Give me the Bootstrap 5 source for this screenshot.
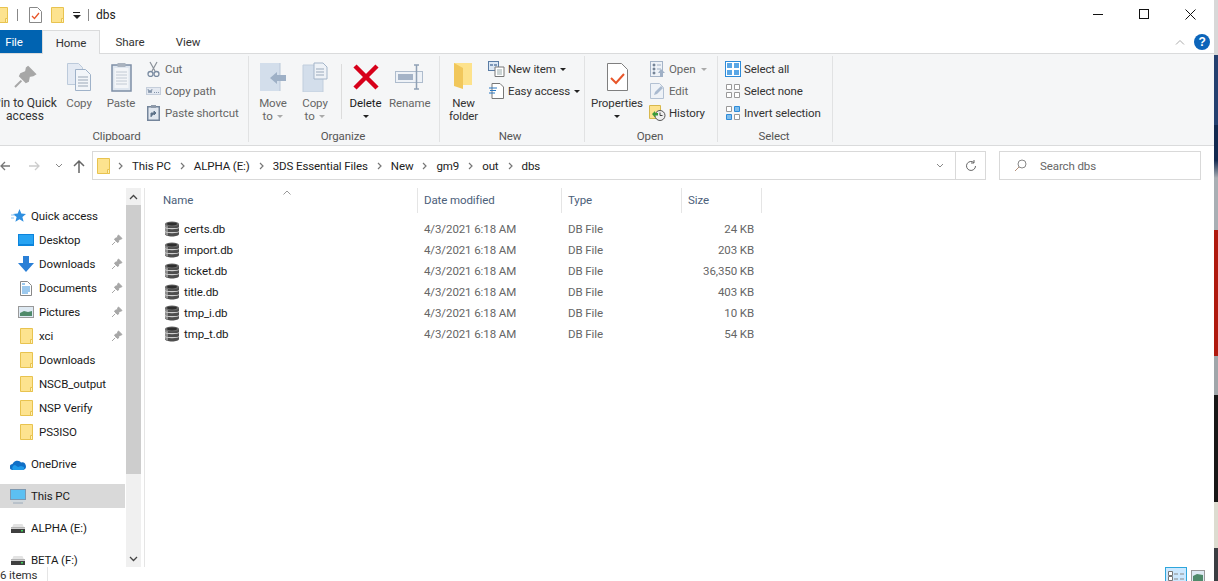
<!DOCTYPE html>
<html lang="en"><head><meta charset="utf-8"><title>dbs</title>
<link href="https://cdn.jsdelivr.net/npm/bootstrap@5.3.0/dist/css/bootstrap.min.css" rel="stylesheet">
<style>
html,body{height:581px;overflow:hidden}
body{font-family:Roboto,"Liberation Sans",sans-serif;font-size:11.5px;letter-spacing:-.1px;line-height:16px;color:#1a1a1a;background:#fff}
svg{display:block;flex:none}
.win{width:1214px;height:581px;overflow:hidden;background:#fff}
.strip{width:4px;height:581px;background:linear-gradient(#d8d8d8 0 55px,#24406f 55px 125px,#12294f 125px 160px,#a9afb4 178px 230px,#b0190f 230px 356px,#a0a6aa 356px 395px,#171717 395px 502px,#dcdcd0 502px 548px,#3a3d42 548px)}
.tbar{height:30px}
.wbtn{width:46px;height:30px;padding-bottom:2px}
.tabs{height:24px;border-bottom:1px solid #dadbdc}
.tabx{height:24px;line-height:25px;color:#333;text-align:center}
.tfile{width:42px;background:#0063b1;color:#fff;height:23px;padding-right:14px}
.thome{width:58px;background:#f5f6f7;border:1px solid #dadbdc;border-bottom:0;position:relative;z-index:1}
.ribbon{height:92px;background:#f5f6f7;border-bottom:1px solid #dadbdc;margin-left:-7px}
.rgrp{height:86px;border-right:1px solid #e1e2e3;margin-top:2px}
.rbody{height:75px}
.rlab{text-align:center;color:#555;height:11px;line-height:11px;padding-right:2px}
.lg{text-align:center;color:#666;line-height:13px;padding-top:4px;white-space:nowrap}
.lg .ic{height:34px;display:flex;justify-content:center;align-items:center;margin-bottom:3px}
.lg.on{color:#1a1a1a}
.pinlab{font-size:12px;letter-spacing:0;display:block;margin:0 -4px}
.smcol{padding-top:2px}
.sm{height:22px;color:#666;white-space:nowrap}
.sm.on{color:#333}
.smi{width:19px;display:flex;justify-content:center;margin-right:2px}
.caret{display:inline-block;width:0;height:0;border:3px solid transparent;border-top:3px solid #222;border-bottom:0;vertical-align:middle;margin-left:2px}
.caret.dim{border-top-color:#aaa}
.vsep{width:1px;height:55px;background:#dcdcdc;margin-top:8px}
.addr{height:29px;margin:5px 0 8px}
.abox{height:29px;border:1px solid #d9d9d9;color:#222;width:894px}
.sbox{height:29px;border:1px solid #d9d9d9;width:202px;color:#666}
.gt{margin:0 9px}
.mainr{height:379px}
.side{width:125px;height:379px;overflow:hidden;padding-top:16px}
.nv{height:24px;white-space:nowrap;color:#1a1a1a;position:relative}
.nv.l1{padding-left:10px}
.nv.l2{padding-left:18px}
.nv .ni{width:16px;margin-right:5px;display:flex;justify-content:center}
.nv .pn{position:absolute;right:2px;top:6px}
.nv.sel{background:#d9d9d9}
.gap1{height:8px}
.sbar{width:15px;height:379px;background:#f0f0f0;margin-left:1px}
.sthumb{height:269px;background:#cdcdcd}
.sarr{height:17px;display:flex;align-items:center;justify-content:center}
.vline{width:1px;background:#e5e5e5;margin-left:3px;height:379px}
.files{padding-left:18px;flex:1}
.hdr{height:30px;color:#4c607a;position:relative}
.hcol{height:25px;line-height:25px;padding-left:6px;border-right:1px solid #e5e5e5}
.hcol.c1{padding-left:0}
.c1{width:255px}.c2{width:144px}.c3{width:120px}.c4{width:80px}
.sortm{position:absolute;left:120px;top:2px}
.frow{height:21px;color:#666}
.frow>div{padding-left:6px}
.frow .c4{text-align:right;padding-right:8px}
.frow .nm{color:#1a1a1a;display:flex;align-items:center;padding-left:1px}
.frow .nm svg{margin-right:4px}
.stat{height:14px;line-height:16px;position:relative;color:#333}
.stat .bar{width:1px;height:14px;background:#e5e5e5;margin-left:10px}
.vbtn{width:22px;height:14px;background:#cce8ff;border:1px solid #2ea6dc;border-bottom:0}
.vbtn2{margin:3px 9px 0 4px}
</style></head><body>
<svg width="0" height="0" style="position:absolute">
<defs>
<symbol id="fold" viewBox="0 0 13 16"><path d="M.5.5h12v15H.5z" fill="#fde38f" stroke="#e8c34f"/><path d="M10.500 15.500v-4h2v4z" fill="#fff1b8" stroke="#e8c34f"/></symbol>
<symbol id="pin" viewBox="0 0 12 12"><path d="M7.500 1l3.500 3.500-1 .6-2 .4-.5 2.500-1 .5-3-3 .5-1 2.500-1 .4-2zM4.200 7.800 1 11" fill="#a7a7a7" stroke="#a7a7a7"/></symbol>
<symbol id="db" viewBox="0 0 16 16"><path d="M1 3v10c0 1.400 3 2.500 7 2.500s7-1.100 7-2.500V3z" fill="#4e4e4e"/><path d="M1 3v10c.8.800 1.500 1.200 3 1.700V4z" fill="#8e8e8e"/><path d="M1 6.500c1 1.500 13 1.500 14 0M1 10.500c1 1.500 13 1.500 14 0" fill="none" stroke="#cfcfcf" stroke-width="1.200"/><ellipse cx="8" cy="3" rx="7" ry="2.500" fill="#6a6a6a"/><ellipse cx="8" cy="3" rx="5" ry="1.400" fill="#2e2e2e"/></symbol>
<symbol id="drive" viewBox="0 0 16 12"><path d="M2 5.500 3.500 2h9L14 5.500z" fill="#e3e3e3"/><rect x="1" y="5.500" width="14" height="5.500" fill="#3f3f3f"/><rect x="1" y="5.500" width="14" height="1.500" fill="#cfcfcf"/><rect x="11" y="8" width="2" height="1.500" fill="#41d35b"/></symbol>
<symbol id="crumb" viewBox="0 0 5 8"><path d="M1 1l3 3-3 3" fill="none" stroke="#777" stroke-width="1.200"/></symbol>
</defs></svg>
<div class="d-flex">
<div class="win">
 <!-- title bar -->
 <div class="tbar d-flex align-items-center">
  <svg width="8" height="16" viewBox="5 0 8 16"><use href="#fold" width="13" height="16"/></svg>
  <div style="width:1px;height:12px;background:#888;margin:0 11px 0 9px"></div>
  <svg width="13" height="16" viewBox="0 0 13 16"><path d="M.5.5h8l4 4v11H.5z" fill="#fff" stroke="#888"/><path d="M3 9l2.500 2.500L10 6" fill="none" stroke="#e8562a" stroke-width="1.300"/></svg>
  <svg width="13" height="16" style="margin-left:9px"><use href="#fold"/></svg>
  <div class="d-flex flex-column align-items-center" style="margin-left:9px;width:7px"><div style="width:7px;height:1px;background:#222;margin-bottom:2px"></div><span class="caret" style="margin:0;border-width:4px 4px 0"></span></div>
  <div style="width:1px;height:12px;background:#888;margin:0 7px 0 8px"></div>
  <span style="font-size:12px;letter-spacing:0">dbs</span>
  <div class="ms-auto d-flex" style="padding-right:1px">
   <div class="wbtn d-flex align-items-center justify-content-center"><div style="width:10px;height:1px;background:#111"></div></div>
   <div class="wbtn d-flex align-items-center justify-content-center"><div style="width:10px;height:10px;border:1px solid #111"></div></div>
   <div class="wbtn d-flex align-items-center justify-content-center"><svg width="11" height="11" viewBox="0 0 11 11"><path d="M.5.500l10 10M10.500.500l-10 10" stroke="#111" fill="none"/></svg></div>
  </div>
 </div>
 <!-- tabs -->
 <div class="tabs d-flex">
  <div class="tabx tfile">File</div><div class="tabx thome">Home</div>
  <div class="tabx" style="width:60px">Share</div><div class="tabx" style="width:56px">View</div>
  <div class="ms-auto d-flex align-items-center" style="padding-right:4px">
   <svg width="10" height="6" viewBox="0 0 10 6" style="margin-right:9px"><path d="M1 5.500l4-4 4 4" fill="none" stroke="#aaa"/></svg>
   <div style="width:16px;height:16px;border-radius:50%;background:#0c65ba;color:#fff;font:bold 12px/16px 'Liberation Sans',sans-serif;text-align:center">?</div>
  </div>
 </div>
 <!-- ribbon -->
 <div class="ribbon d-flex">
  <div class="rgrp" style="width:256px">
   <div class="rbody d-flex">
    <div class="lg on" style="width:64px;margin-right:1px;color:#333"><div class="ic"><svg width="24" height="24" viewBox="0 0 12 12"><use href="#pin" width="12" height="12"/></svg></div><span class="pinlab">Pin to Quick<br>access</span></div>
    <div class="lg" style="width:42px"><div class="ic"><svg width="24" height="28" viewBox="0 0 24 28"><path d="M.5.500h11l4 4v17H.5z" fill="#e4eaf3" stroke="#bccadb"/><path d="M8.500 6.500h10l5 5v16h-15z" fill="#f2f5f9" stroke="#9fb2c9"/><path d="M11 14h10M11 17h10M11 20h10M11 23h10" stroke="#9aa7b7"/></svg></div>Copy</div>
    <div class="lg" style="width:42px"><div class="ic"><svg width="21" height="30" viewBox="0 0 21 30"><rect x="1" y="3" width="19" height="26" fill="#dfe6ef" stroke="#7e8fa6" stroke-width="1.500"/><rect x="3.500" y="6" width="14" height="20" fill="#f3f5f8"/><path d="M5 10h11M5 13h11M5 16h11M5 19h11M5 22h11" stroke="#c2cad4"/><rect x="6.500" y="1" width="8" height="4" fill="#aab3bf"/></svg></div>Paste</div>
    <div class="smcol" style="width:97px;padding-left:2px">
     <div class="sm d-flex align-items-center"><div class="smi"><svg width="13" height="16" viewBox="0 0 13 16"><path d="M3 1l5 9M10 1L5 10" stroke="#8b9199" fill="none" stroke-width="1.200"/><circle cx="3.500" cy="13" r="2.500" fill="none" stroke="#7a8ba1" stroke-width="1.300"/><circle cx="9.500" cy="13" r="2.500" fill="none" stroke="#7a8ba1" stroke-width="1.300"/></svg></div>Cut</div>
     <div class="sm d-flex align-items-center"><div class="smi"><svg width="15" height="8" viewBox="0 0 15 8"><rect x=".5" y=".5" width="14" height="7" fill="#e4e9f1" stroke="#c5cedb"/><path d="M2 2l1 4 1-3 1 3 1-4M8 5.500h1M10 5.500h1M12 5.500h1" stroke="#8495ab" fill="none"/></svg></div>Copy path</div>
     <div class="sm d-flex align-items-center"><div class="smi"><svg width="13" height="16" viewBox="0 0 13 16"><rect x=".75" y="1.750" width="11.500" height="13.500" fill="#e1e7ef" stroke="#74859b" stroke-width="1.500"/><rect x="4" y="0" width="5" height="3" fill="#8e9aaa"/><path d="M4 12V8h4M7 6l2 2-2 2z" fill="#5e7289" stroke="#5e7289"/></svg></div>Paste shortcut</div>
    </div>
   </div>
   <div class="rlab" style="padding-right:8px">Clipboard</div>
  </div>
  <div class="rgrp" style="width:191px">
   <div class="rbody d-flex">
    <div class="lg" style="width:42px;margin-left:3px"><div class="ic"><svg width="26" height="28" viewBox="0 0 26 28"><path d="M0 0h20v28H0z" fill="#d3deeb"/><path d="M20 0v28" stroke="#b9c7d8"/><path d="M10 15l7-6v3h9v6h-9v3z" fill="#9eb0c6"/></svg></div>Move<br>to <span class="caret dim"></span></div>
    <div class="lg" style="width:42px"><div class="ic"><svg width="26" height="30" viewBox="0 0 26 30"><path d="M1 3h20v27H1z" fill="#d3deeb" stroke="#c1cedd"/><path d="M12 1h9l4 4v12H12z" fill="#eef2f7" stroke="#a4b5c9"/><path d="M14 7h8M14 10h8M14 13h8" stroke="#9aa9bb"/></svg></div>Copy<br>to <span class="caret dim"></span></div>
    <div class="vsep" style="margin-left:5px"></div>
    <div class="lg on" style="width:47px"><div class="ic"><svg width="26" height="26" viewBox="0 0 26 26"><path d="M2 2l22 22M24 2L2 24" stroke="#d7001a" stroke-width="4.500" fill="none"/></svg></div>Delete<br><span class="caret" style="margin:0"></span></div>
    <div class="lg" style="width:40px"><div class="ic"><svg width="28" height="26" viewBox="0 0 28 26"><rect x=".5" y="7.500" width="27" height="11" fill="#eef2f7" stroke="#aebccd"/><rect x="3" y="10" width="15" height="6" fill="#a4b3c7"/><path d="M19 1h2.500M24 1h-2.500v24M19 25h2.500M24 25h-2.500" stroke="#8fa0b5" stroke-width="1.500" fill="none"/></svg></div>Rename</div>
   </div>
   <div class="rlab">Organize</div>
  </div>
  <div class="rgrp" style="width:145px">
   <div class="rbody d-flex">
    <div class="lg on" style="width:47px;color:#333"><div class="ic"><svg width="20" height="28" viewBox="0 0 20 28"><path d="M0 0h18v22H0z" fill="#fde28c"/><path d="M0 0l9 5v21L0 23z" fill="#f1c75b"/></svg></div>New<br>folder</div>
    <div class="smcol" style="width:95px">
     <div class="sm on d-flex align-items-center"><div class="smi"><svg width="17" height="16" viewBox="0 0 17 16"><rect x=".5" y=".5" width="10" height="9" fill="#dce8f5" stroke="#5a7ca5"/><path d="M2 3h3v2H2zM6 3h3v2H6z" fill="#7d98ba"/><path d="M7 6h9v9.500H7z" fill="#fff" stroke="#777"/><path d="M9 9h5M9 11h5M9 13h5" stroke="#9aa"/></svg></div>New item <span class="caret" style="margin-left:4px"></span></div>
     <div class="sm on d-flex align-items-center"><div class="smi"><svg width="15" height="16" viewBox="0 0 15 16"><path d="M3 .5h8l3.500 3.500v11.500H3z" fill="#fff" stroke="#777"/><path d="M0 5h8M1 7.500h6M0 10h6" stroke="#2b79c2"/></svg></div>Easy access <span class="caret" style="margin-left:4px"></span></div>
    </div>
   </div>
   <div class="rlab" style="padding-right:4px">New</div>
  </div>
  <div class="rgrp" style="width:133px">
   <div class="rbody d-flex">
    <div class="lg on" style="width:62px;margin-left:1px;color:#333"><div class="ic"><svg width="21" height="28" viewBox="0 0 21 28"><path d="M.5.500h14l6 6v21H.5z" fill="#fff" stroke="#7f7f7f"/><path d="M4 15l5 5 8-9" fill="none" stroke="#e8562a" stroke-width="2"/></svg></div>Properties<br><span class="caret" style="margin:0"></span></div>
    <div class="smcol" style="width:68px">
     <div class="sm d-flex align-items-center"><div class="smi"><svg width="15" height="16" viewBox="0 0 15 16"><rect x=".5" y=".5" width="12" height="15" fill="#eef2f7" stroke="#a4b3c7"/><path d="M3 3h2v2H3zM3 7h2v2H3zM3 11h2v2H3zM7 4h4M7 8h4" stroke="#9fb0c6"/><path d="M11 8l4 4h-2v4h-3v-4H8z" fill="#9fb0c6"/></svg></div>Open <span class="caret dim" style="margin-left:6px"></span></div>
     <div class="sm d-flex align-items-center"><div class="smi"><svg width="15" height="16" viewBox="0 0 15 16"><path d="M.5.500h9l4 4v11H.5z" fill="#eef2f7" stroke="#b3c1d3"/><path d="M4 12l1-3 6-6 2 2-6 6z" fill="#a9bad0"/></svg></div>Edit</div>
     <div class="sm on d-flex align-items-center"><div class="smi"><svg width="17" height="16" viewBox="0 0 17 16"><path d="M.5.500h11v13H.5z" fill="#fde38f" stroke="#d8b84e"/><circle cx="11" cy="10.500" r="5" fill="#eee" stroke="#555"/><path d="M11 7.500v3h2.500" stroke="#444" fill="none"/><path d="M3 9l3-3v2h3v2.500H6v2z" fill="#3c9b3a"/></svg></div>History</div>
    </div>
   </div>
   <div class="rlab">Open</div>
  </div>
  <div class="rgrp" style="width:115px">
   <div class="rbody smcol" style="padding-left:5px">
    <div class="sm on d-flex align-items-center"><div class="smi"><svg width="16" height="16" viewBox="0 0 16 16"><rect x=".5" y=".5" width="15" height="15" fill="#fff" stroke="#2e8bd8"/><path d="M2 2h5v5H2zM9 2h5v5H9zM2 9h5v5H2zM9 9h5v5H9z" fill="#5aa7e6"/></svg></div>Select all</div>
    <div class="sm on d-flex align-items-center"><div class="smi"><svg width="16" height="16" viewBox="0 0 16 16"><path d="M1.500 1.500h5v5h-5zM9.500 1.500h5v5h-5zM1.500 9.500h5v5h-5zM9.500 9.500h5v5h-5z" fill="#fff" stroke="#999"/></svg></div>Select none</div>
    <div class="sm on d-flex align-items-center"><div class="smi"><svg width="16" height="16" viewBox="0 0 16 16"><path d="M1.500 1.500h5v5h-5zM9.500 9.500h5v5h-5z" fill="#fff" stroke="#999"/><path d="M9.500 1.500h5v5h-5zM1.500 9.500h5v5h-5z" fill="#7fbdec" stroke="#2e8bd8"/></svg></div>Invert selection</div>
   </div>
   <div class="rlab">Select</div>
  </div>
 </div>
 <!-- address -->
 <div class="addr d-flex align-items-center">
  <svg width="10" height="14" viewBox="0 0 10 14"><path d="M10 7H1M5 3 1 7l4 4" stroke="#777" fill="none" stroke-width="1.300"/></svg>
  <svg width="12" height="14" viewBox="0 0 12 14" style="margin-left:19px"><path d="M0 7h10M6 3l4 4-4 4" stroke="#ccc" fill="none" stroke-width="1.300"/></svg>
  <svg width="8" height="5" viewBox="0 0 8 5" style="margin-left:14px"><path d="M1 1l3 3 3-3" stroke="#888" fill="none"/></svg>
  <svg width="12" height="14" viewBox="0 0 12 14" style="margin-left:10px"><path d="M6 14V2M1 7l5-5 5 5" stroke="#666" fill="none" stroke-width="1.500"/></svg>
  <div class="abox d-flex align-items-center" style="margin-left:7px">
   <svg width="13" height="16" style="margin-left:4px"><use href="#fold"/></svg>
   <svg width="5" height="8" style="margin:0 9px 0 8px"><use href="#crumb"/></svg><span>This PC</span><svg class="gt" width="5" height="8"><use href="#crumb"/></svg><span>ALPHA (E:)</span><svg class="gt" width="5" height="8"><use href="#crumb"/></svg><span>3DS Essential Files</span><svg class="gt" width="5" height="8"><use href="#crumb"/></svg><span>New</span><svg class="gt" width="5" height="8"><use href="#crumb"/></svg><span>gm9</span><svg class="gt" width="5" height="8"><use href="#crumb"/></svg><span>out</span><svg class="gt" width="5" height="8"><use href="#crumb"/></svg><span>dbs</span>
   <svg class="ms-auto" width="8" height="5" viewBox="0 0 8 5" style="margin-right:11px"><path d="M1 1l3 3 3-3" stroke="#888" fill="none"/></svg>
   <div class="d-flex align-items-center justify-content-center" style="width:30px;height:27px;border-left:1px solid #d9d9d9"><svg width="12" height="12" viewBox="0 0 12 12"><path d="M10.500 6A4.500 4.500 0 1 1 9 2.600M9 0v3H6" fill="none" stroke="#666"/></svg></div>
  </div>
  <div class="sbox d-flex align-items-center" style="margin-left:13px">
   <svg width="13" height="13" viewBox="0 0 13 13" style="margin:0 13px 0 14px"><circle cx="8" cy="5" r="4" fill="none" stroke="#888"/><path d="M5 8 1 12" stroke="#b58f78"/></svg>Search dbs
  </div>
 </div>
 <!-- main -->
 <div class="mainr d-flex">
  <div class="side">
   <div class="nv l1 d-flex align-items-center"><div class="ni"><svg width="15" height="14" viewBox="0 0 15 14"><path d="M8.500 0l1.800 4.500 4.700.4-3.600 3 1.200 4.900-4.100-2.600-4.100 2.600 1.200-4.900-3.600-3 4.700-.4z" fill="#2e8fe0"/><path d="M0 6h4M0 9h3" stroke="#8ac4f2"/></svg></div>Quick access</div>
   <div class="nv l2 d-flex align-items-center"><div class="ni"><svg width="16" height="12" viewBox="0 0 16 12"><rect width="16" height="12" fill="#0c84dc"/><rect x="1" y="1" width="14" height="9" fill="#27a3f2"/></svg></div>Desktop<svg class="pn" width="12" height="12"><use href="#pin"/></svg></div>
   <div class="nv l2 d-flex align-items-center"><div class="ni"><svg width="16" height="16" viewBox="0 0 16 16"><path d="M5 0h6v7h5l-8 9-8-9h5z" fill="#2a7fd6"/></svg></div>Downloads<svg class="pn" width="12" height="12"><use href="#pin"/></svg></div>
   <div class="nv l2 d-flex align-items-center"><div class="ni"><svg width="12" height="15" viewBox="0 0 12 15"><path d="M.5.500h7l4 4v10H.5z" fill="#fff" stroke="#888"/><path d="M2 6h8M2 8h8M2 10h8M2 12h6M2 3h3" stroke="#3a93dc"/></svg></div>Documents<svg class="pn" width="12" height="12"><use href="#pin"/></svg></div>
   <div class="nv l2 d-flex align-items-center"><div class="ni"><svg width="16" height="12" viewBox="0 0 16 12"><rect x=".5" y=".5" width="15" height="11" fill="#dfeaf3" stroke="#999"/><path d="M2 7l4-2 4 1 4-1v5H2z" fill="#4f8a6a"/></svg></div>Pictures<svg class="pn" width="12" height="12"><use href="#pin"/></svg></div>
   <div class="nv l2 d-flex align-items-center"><div class="ni"><svg width="13" height="16"><use href="#fold"/></svg></div>xci<svg class="pn" width="12" height="12"><use href="#pin"/></svg></div>
   <div class="nv l2 d-flex align-items-center"><div class="ni"><svg width="13" height="16"><use href="#fold"/></svg></div>Downloads</div>
   <div class="nv l2 d-flex align-items-center"><div class="ni"><svg width="13" height="16"><use href="#fold"/></svg></div>NSCB_output</div>
   <div class="nv l2 d-flex align-items-center"><div class="ni"><svg width="13" height="16"><use href="#fold"/></svg></div>NSP Verify</div>
   <div class="nv l2 d-flex align-items-center"><div class="ni"><svg width="13" height="16"><use href="#fold"/></svg></div>PS3ISO</div>
   <div class="gap1"></div>
   <div class="nv l1 d-flex align-items-center"><div class="ni"><svg width="16" height="11" viewBox="0 0 16 11"><path d="M3 11a3 3 0 0 1-.5-6A5 5 0 0 1 11 3.500 3.700 3.700 0 0 1 13 11z" fill="#0f6fc6"/><path d="M3 11a3 3 0 0 1 2-5l3 2 3-1 3 1a2.500 2.500 0 0 1-1 3z" fill="#1e9bea"/></svg></div>OneDrive</div>
   <div class="gap1"></div>
   <div class="nv l1 sel d-flex align-items-center"><div class="ni"><svg width="16" height="15" viewBox="0 0 16 15"><rect x=".5" y=".5" width="15" height="10" fill="#5cc0f2" stroke="#7d98b0"/><path d="M3 14h10" stroke="#9ab"/><path d="M1 12h14" stroke="#c9d6e0"/></svg></div>This PC</div>
   <div class="gap1"></div>
   <div class="nv l1 d-flex align-items-center"><div class="ni"><svg width="16" height="12"><use href="#drive"/></svg></div>ALPHA (E:)</div>
   <div class="gap1"></div>
   <div class="nv l1 d-flex align-items-center"><div class="ni"><svg width="16" height="12"><use href="#drive"/></svg></div>BETA (F:)</div>
  </div>
  <div class="sbar d-flex flex-column">
   <div class="sarr"><svg width="9" height="6" viewBox="0 0 9 6"><path d="M1 5l3.500-3.500L8 5" fill="none" stroke="#444" stroke-width="1.300"/></svg></div>
   <div class="sthumb"></div>
   <div class="sarr mt-auto"><svg width="9" height="6" viewBox="0 0 9 6"><path d="M1 1l3.500 3.500L8 1" fill="none" stroke="#444" stroke-width="1.300"/></svg></div>
  </div>
  <div class="vline"></div>
  <div class="files">
   <div class="hdr d-flex">
    <svg class="sortm" width="8" height="5" viewBox="0 0 8 5"><path d="M.5 4.500 4 1l3.500 3.500" fill="none" stroke="#999"/></svg>
    <div class="hcol c1">Name</div><div class="hcol c2">Date modified</div><div class="hcol c3">Type</div><div class="hcol c4">Size</div>
   </div>
   <div class="frow d-flex align-items-center"><div class="c1 nm"><svg width="16" height="16"><use href="#db"/></svg><span>certs.db</span></div><div class="c2">4/3/2021 6:18 AM</div><div class="c3">DB File</div><div class="c4">24 KB</div></div>
   <div class="frow d-flex align-items-center"><div class="c1 nm"><svg width="16" height="16"><use href="#db"/></svg><span>import.db</span></div><div class="c2">4/3/2021 6:18 AM</div><div class="c3">DB File</div><div class="c4">203 KB</div></div>
   <div class="frow d-flex align-items-center"><div class="c1 nm"><svg width="16" height="16"><use href="#db"/></svg><span>ticket.db</span></div><div class="c2">4/3/2021 6:18 AM</div><div class="c3">DB File</div><div class="c4">36,350 KB</div></div>
   <div class="frow d-flex align-items-center"><div class="c1 nm"><svg width="16" height="16"><use href="#db"/></svg><span>title.db</span></div><div class="c2">4/3/2021 6:18 AM</div><div class="c3">DB File</div><div class="c4">403 KB</div></div>
   <div class="frow d-flex align-items-center"><div class="c1 nm"><svg width="16" height="16"><use href="#db"/></svg><span>tmp_i.db</span></div><div class="c2">4/3/2021 6:18 AM</div><div class="c3">DB File</div><div class="c4">10 KB</div></div>
   <div class="frow d-flex align-items-center"><div class="c1 nm"><svg width="16" height="16"><use href="#db"/></svg><span>tmp_t.db</span></div><div class="c2">4/3/2021 6:18 AM</div><div class="c3">DB File</div><div class="c4">54 KB</div></div>
  </div>
 </div>
 <!-- status -->
 <div class="stat d-flex">
  <span>6 items</span><div class="bar"></div>
  <div class="ms-auto d-flex">
   <div class="vbtn d-flex align-items-start" style="padding:3px 2px 0"><svg width="17" height="10" viewBox="0 0 17 10"><path d="M.5.500h4v4h-4zM.5 5.500h4v4h-4z" fill="#fff" stroke="#777"/><path d="M6 3h4M12 3h4M6 8h4M12 8h4" stroke="#888"/></svg></div>
   <svg class="vbtn2" width="14" height="12" viewBox="0 0 14 12"><rect x=".5" y=".5" width="13" height="11" fill="#dfeaf3" stroke="#999"/><path d="M2 6l4-2 6 1v6H2z" fill="#4f8a6a"/></svg>
  </div>
 </div>
</div>
<div class="strip"></div>
</div>
</body></html>
